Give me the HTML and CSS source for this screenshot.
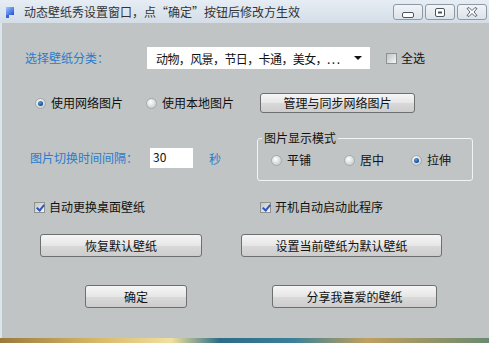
FILE: index.html
```html
<!DOCTYPE html>
<html lang="zh-CN">
<head>
<meta charset="UTF-8">
<title>动态壁纸秀设置窗口</title>
<link rel="stylesheet" href="styles.css">
</head>
<body>

<div class="window">
  <div class="titlebar">
    <svg class="app-icon" width="8" height="11" viewBox="0 0 8 11">
      <defs>
        <linearGradient id="ig" x1="0" y1="0" x2="1" y2="1">
          <stop offset="0" stop-color="#9fc4ff"/>
          <stop offset="1" stop-color="#2050d8"/>
        </linearGradient>
      </defs>
      <rect x="0" y="0" width="8" height="8" fill="url(#ig)"/>
      <rect x="0" y="8" width="3" height="3" fill="#3a66d0"/>
    </svg>
    <span class="title">动态壁纸秀设置窗口，点“确定”按钮后修改方生效</span>
    <div class="caption-buttons">
      <span class="cap-btn">
        <svg width="12" height="6" viewBox="0 0 12 6"><rect x="0.5" y="0.5" width="11" height="5" rx="1.5" fill="#fff" stroke="#4a5560"/></svg>
      </span>
      <span class="cap-btn">
        <svg width="10" height="9" viewBox="0 0 10 9"><rect x="0.5" y="0.5" width="9" height="8" rx="1.5" fill="#fff" stroke="#4a5560"/><rect x="3" y="3.5" width="4" height="2" fill="#4a5560"/></svg>
      </span>
      <span class="cap-btn">
        <svg width="12" height="10" viewBox="0 0 12 10"><path d="M1 1.5 L3 0.5 L6 3.5 L9 0.5 L11 1.5 L8 5 L11 8.5 L9 9.5 L6 6.5 L3 9.5 L1 8.5 L4 5 Z" fill="#fff" stroke="#4a5560" stroke-width="0.9" stroke-linejoin="round"/></svg>
      </span>
    </div>
  </div>

  <div class="client">
    <div class="row row-category">
      <span class="label blue">选择壁纸分类：</span>
      <div class="combo">
        <span class="combo-text">动物，风景，节日，卡通，美女，. . .</span>
        <span class="combo-arrow"></span>
      </div>
      <span class="check select-all"><span class="box"></span>全选</span>
    </div>

    <div class="row row-source">
      <span class="radio on src-net"></span>
      <span class="opt-text">使用网络图片</span>
      <span class="radio src-local"></span>
      <span class="opt-text">使用本地图片</span>
      <button class="btn btn-manage">管理与同步网络图片</button>
    </div>

    <div class="row row-interval">
      <div class="interval">
        <span class="label blue interval-label">图片切换时间间隔：</span>
        <span class="textbox">30</span>
        <span class="blue unit">秒</span>
      </div>
      <fieldset class="group">
        <legend>图片显示模式</legend>
        <div class="group-options">
          <span class="radio mode-tile"></span>
          <span class="opt-text">平铺</span>
          <span class="radio mode-center"></span>
          <span class="opt-text">居中</span>
          <span class="radio on mode-stretch"></span>
          <span class="opt-text">拉伸</span>
        </div>
      </fieldset>
    </div>

    <div class="row row-checks">
      <span class="check auto-change"><span class="box checked"></span>自动更换桌面壁纸</span>
      <span class="check"><span class="box checked"></span>开机自动启动此程序</span>
    </div>

    <div class="row row-defaults">
      <button class="btn btn-restore">恢复默认壁纸</button>
      <button class="btn btn-setdefault">设置当前壁纸为默认壁纸</button>
    </div>

    <div class="row row-bottom">
      <button class="btn btn-ok">确定</button>
      <button class="btn btn-share">分享我喜爱的壁纸</button>
    </div>
  </div>
</div>
<div class="desktop"></div>

</body>
</html>
```

FILE: styles.css
```css
body {
  margin: 0;
  font-family: "Noto Sans CJK SC", "Noto Sans", sans-serif;
  font-size: 12px;
  color: #111;
  background: #c0c4c4;
  overflow: hidden;
}
.window {
  width: 489px;
  height: 338px;
  box-sizing: border-box;
  border-left: 2px solid #dbe5ee;
  background: #c0c4c4;
  display: flex;
  flex-direction: column;
}
.titlebar {
  height: 23px;
  flex: none;
  display: flex;
  align-items: center;
  background: linear-gradient(#e6edf4, #d4dde6);
  margin-left: -2px;
}
.app-icon { margin: 1px 0 0 6px; }
.title { margin-left: 10px; color: #333; line-height: 14px; }
.caption-buttons {
  margin-left: auto;
  margin-right: 2px;
  display: flex;
  gap: 2px;
  align-self: flex-start;
  margin-top: 4px;
}
.cap-btn {
  width: 30px;
  height: 16px;
  box-sizing: border-box;
  border: 1px solid #8f99a4;
  border-radius: 3px;
  background: linear-gradient(#f1f4f7, #dde3ea);
  display: flex;
  align-items: center;
  justify-content: center;
}
.cap-btn:first-child svg { margin-top: 5px; }

.client { display: flex; flex-direction: column; }
.row { display: flex; align-items: center; }
.blue { color: #2a7ccc; }
.label { line-height: 14px; }

/* row 1 */
.row-category { margin-top: 24px; height: 22px; }
.row-category .label { margin-left: 23px; width: 122px; }
.combo {
  width: 223px;
  height: 22px;
  background: #fff;
  display: flex;
  align-items: center;
}
.combo-text { margin-left: 9px; letter-spacing: -0.6px; }
.combo-arrow {
  margin-left: auto;
  margin-right: 8px;
  width: 0;
  height: 0;
  border-left: 4px solid transparent;
  border-right: 4px solid transparent;
  border-top: 4px solid #111;
}
.select-all { margin-left: 16px; }

.check { display: flex; align-items: center; line-height: 14px; }
.box {
  width: 11px;
  height: 11px;
  box-sizing: border-box;
  border: 1px solid #8d9393;
  background: linear-gradient(135deg, #bfc4c4, #f6f6f6);
  margin-right: 4px;
  position: relative;
}
.box.checked::after {
  content: "";
  position: absolute;
  left: 3px;
  top: 0px;
  width: 3px;
  height: 6px;
  border-right: 2px solid #3552b8;
  border-bottom: 2px solid #3552b8;
  transform: rotate(40deg);
}

.radio {
  width: 11px;
  height: 11px;
  box-sizing: border-box;
  border-radius: 50%;
  border: 1px solid #a4aaaa;
  background: radial-gradient(circle at 40% 35%, #ffffff, #cfd3d3 70%);
  position: relative;
}
.radio.on::after {
  content: "";
  position: absolute;
  left: 2px;
  top: 2px;
  width: 5px;
  height: 5px;
  border-radius: 50%;
  background: radial-gradient(circle at 40% 35%, #5aa0e8, #0d3f86 75%);
}
.opt-text { margin-left: 5px; line-height: 14px; }

/* row 2 */
.row-source { margin-top: 24px; height: 20px; }
.src-net { margin-left: 33px; }
.src-local { margin-left: 23px; }
.btn-manage { margin-left: 26px; width: 155px; height: 20px; }

.btn {
  font-family: inherit;
  font-size: 12px;
  color: #111;
  padding: 0;
  box-sizing: border-box;
  border: 1px solid #6d7070;
  border-radius: 3px;
  background: linear-gradient(#f6f6f6, #e6e6e6 50%, #d9d9d9 51%, #cdcdcd);
  line-height: 14px;
}

/* row 3 */
.row-interval { margin-top: 18px; height: 50px; align-items: flex-start; }
.interval {
  width: 255px;
  margin-top: 17px;
  display: flex;
  align-items: center;
}
.interval-label { margin-left: 28px; width: 120px; }
.textbox {
  width: 43px;
  height: 20px;
  box-sizing: border-box;
  background: #fff;
  padding: 2px 0 0 3px;
  line-height: 14px;
}
.unit { margin-left: 16px; }
.group {
  margin: 0;
  width: 216px;
  height: 50px;
  box-sizing: border-box;
  border: 1px solid #f2f4f4;
  border-radius: 3px;
  padding: 0 0 0 13px;
}
.group legend {
  padding: 0 2px;
  margin-left: -9px;
  line-height: 14px;
}
.group-options { display: flex; align-items: center; margin-top: 8px; }
.mode-center { margin-left: 33px; }
.mode-stretch { margin-left: 27px; }

/* row 4 */
.row-checks { margin-top: 19px; height: 14px; }
.auto-change { margin-left: 32px; width: 226px; }

/* row 5 */
.row-defaults { margin-top: 20px; height: 23px; }
.btn-restore { margin-left: 38px; width: 162px; height: 23px; }
.btn-setdefault { margin-left: 39px; width: 201px; height: 23px; }

/* row 6 */
.row-bottom { margin-top: 28px; height: 23px; }
.btn-ok { margin-left: 83px; width: 102px; height: 23px; }
.btn-share { margin-left: 85px; width: 165px; height: 23px; }

.desktop {
  height: 5px;
  background: linear-gradient(90deg, #9a7a3a, #d8b868 20%, #f0e0a0 35%, #2c6c86 45%, #3a8098 60%, #c0a060 75%, #6a8a70);
}
```
